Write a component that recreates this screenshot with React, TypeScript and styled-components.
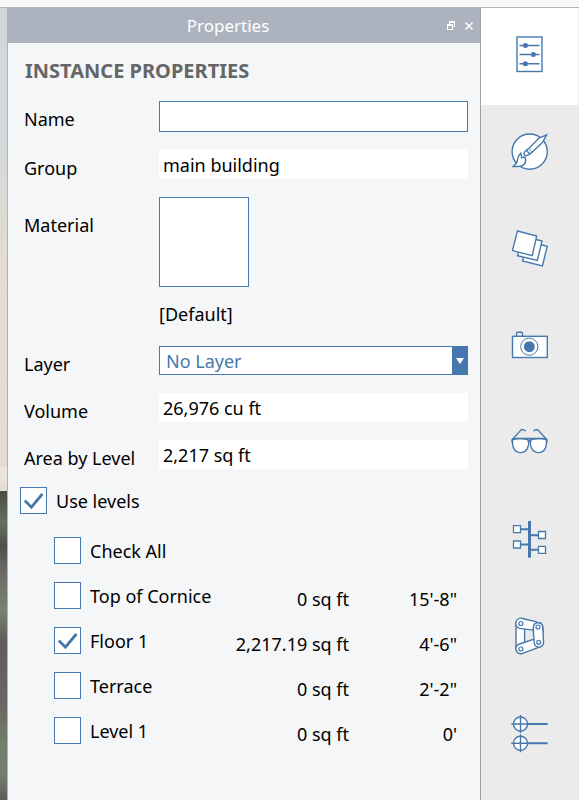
import React, { useState } from "react";
import styled, { createGlobalStyle } from "styled-components";

const BLUE = "#4678ad";
const FONT = '"Noto Sans", "Open Sans", sans-serif';

const GlobalStyle = createGlobalStyle`
  * { box-sizing: border-box; }
  html, body { margin: 0; }
  body { background: #f4f6f8; }
  body, button, input, select {
    font-family: ${FONT};
    font-size: 18px;
    line-height: 24px;
    color: #000;
  }
`;

const Window = styled.div`
  display: flex;
  flex-direction: column;
  min-height: 100vh;
`;

const TopStrip = styled.div`
  height: 8px;
  background: #f7f7f7;
  border-bottom: 1px solid #acb3bf;
`;

const Workspace = styled.div`
  flex: 1;
  display: flex;
`;

const SceneEdge = styled.div`
  width: 8px;
  border-right: 1px solid #acb3bf;
  background: linear-gradient(
    #d3d7db 0%,
    #d3d8db 16%,
    #dcdad5 24%,
    #e6ddd1 38%,
    #e5dcd0 58%,
    #eee9df 58%,
    #e3ddd1 61%,
    #4c4b46 61%,
    #65705f 65%,
    #4f504b 68%,
    #6d6866 71%,
    #77836f 76%,
    #605b5a 80%,
    #6b6664 88%,
    #728069 93%,
    #747d70 97%,
    #5e5a58 100%
  );
`;

const Panel = styled.section`
  flex: 1;
  min-width: 0;
  background: #f4f6f8;
`;

const TitleBar = styled.header`
  display: flex;
  align-items: center;
  height: 35px;
  padding: 0 2px 0 6px;
  background: #acb3bf;
`;

const Title = styled.h1`
  flex: 1;
  margin: 0;
  font-size: 17px;
  font-weight: 400;
  text-align: center;
  color: #fff;
`;

const TitleButton = styled.button`
  display: grid;
  place-items: center;
  width: 18px;
  height: 18px;
  padding: 0;
  border: 0;
  background: none;
`;

const Content = styled.div`
  padding: 16px 12px 16px 16px;
`;

const Heading = styled.h2`
  margin: 0 0 18px;
  padding-left: 1px;
  font-size: 20px;
  font-weight: 700;
  color: #666;
`;

const Fields = styled.div`
  display: grid;
  grid-template-columns: 135px 1fr;
  row-gap: 18px;
`;

const Label = styled.label<{ $tall?: boolean }>`
  padding-top: ${(p) => (p.$tall ? 17 : 7)}px;
  line-height: 22px;
  white-space: nowrap;
`;

const TextInput = styled.input`
  width: 100%;
  height: 31px;
  padding: 0 4px;
  border: 1px solid ${BLUE};
  border-radius: 0;
  background: #fff;
`;

const ReadOnlyInput = styled(TextInput)`
  height: 29px;
  border: 0;
`;

const Swatch = styled.button`
  display: block;
  width: 90px;
  height: 90px;
  border: 1px solid ${BLUE};
  background: #fff;
`;

const SwatchName = styled.div`
  padding: 15px 0 2px;
`;

const SelectBox = styled.div`
  display: grid;
  grid-template-columns: 1fr 16px;
  height: 29px;
  border: 1px solid ${BLUE};
  border-right: 0;
  background: linear-gradient(${BLUE}, ${BLUE}) right / 16px 100% no-repeat #fff;
`;

const Select = styled.select`
  grid-area: 1 / 1 / 2 / 3;
  appearance: none;
  padding: 0 20px 0 6px;
  border: 0;
  background: none;
  color: ${BLUE};
`;

const SelectArrow = styled.svg`
  grid-area: 1 / 2;
  place-self: center;
  pointer-events: none;
`;

const CheckLabel = styled.label`
  display: flex;
  align-items: center;
  gap: 9px;
  white-space: nowrap;
`;

const MasterRow = styled.div`
  display: flex;
  margin: 18px 0 14px -4px;
`;

const Box = styled.span`
  display: grid;
  width: 27px;
  height: 27px;
`;

const BoxInput = styled.input`
  grid-area: 1 / 1;
  appearance: none;
  margin: 0;
  border: 1px solid ${BLUE};
  background: #fff;
`;

const Tick = styled.svg`
  grid-area: 1 / 1;
  pointer-events: none;
`;

const LevelTable = styled.table`
  width: calc(100% - 41px);
  margin-left: 30px;
  border-collapse: collapse;
`;

const LevelCell = styled.td`
  height: 45px;
  padding: 0;
`;

const ValueCell = styled(LevelCell)`
  padding-top: 6px;
  text-align: right;
  white-space: nowrap;
`;

const ElevationCell = styled(ValueCell)`
  width: 108px;
`;

const Sidebar = styled.nav`
  display: flex;
  flex-direction: column;
  width: 99px;
  border-left: 1px solid #a0a0a0;
  border-right: 1px solid #ebebeb;
  background: #ebebeb;
`;

const TabButton = styled.button<{ $active: boolean }>`
  display: flex;
  justify-content: center;
  height: 97px;
  padding: 17px 0 0 1px;
  border: 0;
  background: ${(p) => (p.$active ? "#fff" : "none")};
`;

const TabIcon = styled.svg`
  flex: none;
  width: 60px;
  height: 60px;
  fill: #fff;
  stroke: ${BLUE};
  stroke-width: 1.4;
`;

type CheckProps = { label: string; checked: boolean; onChange: () => void };

function Check({ label, checked, onChange }: CheckProps) {
  return (
    <CheckLabel>
      <Box>
        <BoxInput type="checkbox" checked={checked} onChange={onChange} />
        {checked && (
          <Tick width="27" height="27" viewBox="0 0 27 27" fill="none" stroke={BLUE} strokeWidth="2.8">
            <path d="M4.8 13.6 11.4 20.2 22.4 7" />
          </Tick>
        )}
      </Box>
      {label}
    </CheckLabel>
  );
}

const tabs = [
  {
    name: "Properties",
    top: 0,
    icon: (
      <>
        <rect x="17" y="12" width="25" height="34.5" />
        <path d="M19.5 20.5h20M19.5 29.5h20M19.5 38.7h20" />
        <g fill={BLUE} stroke="none">
          <circle cx="25.4" cy="20.5" r="2.5" />
          <circle cx="33.4" cy="29.5" r="2.5" />
          <circle cx="25.4" cy="38.7" r="2.5" />
        </g>
      </>
    ),
  },
  {
    name: "Materials",
    top: 2,
    icon: (
      <>
        <circle cx="29.7" cy="31.6" r="17.6" />
        <path d="M46.6 14.8 39 18 28.6 28.8l3.2 3.8L42.4 22.6Z" />
        <path d="M28.6 28.8c-1.6.3-4.6 3-4.6 4.8 0 1.9 1.5 2.7 3 1.9 1.5-.8 3.8-2.2 4.8-2.9" />
        <path d="M26.4 30.3 30.2 34.2" />
        <path d="M20.7 33.2c-2.5 2.4-3.2 4.3-3.3 7-.2 2.5-1.6 4.5-4.2 6.3 3.3.2 7.3.4 9.7-1.1 2.3-1.5 3.4-3.6 2.5-7.3l-2-1-1.6.7Z" />
      </>
    ),
  },
  {
    name: "Layers",
    top: -1,
    icon: (
      <>
        <path d="m27.6 21.3 19.6 5-4.8 19.6-19.8-5Z" />
        <path d="m22.6 16 19.4 5-4.7 19.5-19.8-4.8Z" />
        <path d="m17.4 11 19.3 5-4.5 19.6-19.7-5Z" />
      </>
    ),
  },
  {
    name: "Scenes",
    top: 1,
    icon: (
      <>
        <path d="M16.5 21v-2.7q0-1 1-1h4q1 0 1 1V21" fill="none" />
        <rect x="12.5" y="21.3" width="34.8" height="21.2" />
        <circle cx="29.3" cy="31.7" r="8.6" strokeWidth="1" />
        <circle cx="29.3" cy="31.7" r="5.5" fill={BLUE} stroke="none" />
      </>
    ),
  },
  {
    name: "Visual styles",
    top: 1,
    icon: (
      <>
        <path d="M12.6 27.3c4-.8 11-.8 15.9.6.9 7.7-2.5 12.7-8 12.7-5.6 0-8.6-4.7-7.9-13.3Z" />
        <path d="M46.4 27.3c-4-.8-11-.8-15.9.6-.9 7.7 2.5 12.7 8 12.7 5.6 0 8.6-4.7 7.9-13.3Z" />
        <path
          d="M12.4 31 11.9 28l9.4-10.4 2 .1 2.5 1.3M46.6 31l.5-3-9.4-10.4-2 .1L33.2 19M12 28l4-1.5h27l4 1.5M27.5 29.5q2-2 4 0"
          fill="none"
        />
      </>
    ),
  },
  {
    name: "Levels tree",
    top: 0,
    icon: (
      <>
        <path d="M29.5 11v36.7" strokeWidth="3" />
        <path d="M21 19.3h8M21 34.5h8M30 25.2h8M30 39.8h8" strokeWidth="2" />
        <path d="M13.5 15.7h7v7h-7ZM13.5 31h7v7h-7ZM38.5 21.5h7v7h-7ZM38.5 36.3h7v7h-7Z" strokeWidth="1.3" />
      </>
    ),
  },
  {
    name: "Structure",
    top: 1,
    icon: (
      <>
        <path d="M16 17v26h8.6V19Z" />
        <path d="m19.5 38 16-5.3a4.5 4.5 0 0 1 5 8L22 47.6A4.9 4.9 0 0 1 19.5 38Z" />
        <path d="M33.4 21a4.7 4.7 0 0 1 9.3-.4l.9 15.5a4.7 4.7 0 0 1-9.4.6Z" />
        <path d="m21.5 12.2 15 3.7a4.6 4.6 0 0 1-1.8 8.5l-15-2a5.2 5.2 0 0 1 1.8-10.2Z" />
        <path d="M33.5 29.6 33.4 21a4.7 4.7 0 0 1 9.3-.4l.5 8" />
        <circle cx="20.9" cy="17.5" r="2" strokeWidth="1.2" />
        <circle cx="38" cy="21" r="2" strokeWidth="1.2" />
        <circle cx="38.7" cy="36.3" r="2" strokeWidth="1.2" />
        <circle cx="20.9" cy="43" r="2" strokeWidth="1.2" />
      </>
    ),
  },
  {
    name: "Levels",
    top: 0,
    icon: (
      <>
        <circle cx="20.5" cy="20" r="7" />
        <circle cx="20.5" cy="39.3" r="7" />
        <path d="M11.3 20h16M20.5 11v18M11.3 39.3h16M20.5 30.3v18" />
        <path d="M27 20h20.7M27 39.3h20.7" strokeWidth="1.9" />
      </>
    ),
  },
];

const initialLevels = [
  { name: "Top of Cornice", area: "0 sq ft", elevation: "15'-8\"", checked: false },
  { name: "Floor 1", area: "2,217.19 sq ft", elevation: "4'-6\"", checked: true },
  { name: "Terrace", area: "0 sq ft", elevation: "2'-2\"", checked: false },
  { name: "Level 1", area: "0 sq ft", elevation: "0'", checked: false },
];

export default function App() {
  const [active, setActive] = useState("Properties");
  const [useLevels, setUseLevels] = useState(true);
  const [levels, setLevels] = useState(initialLevels);
  const allChecked = levels.every((l) => l.checked);

  return (
    <>
      <GlobalStyle />
      <Window>
        <TopStrip />
        <Workspace>
          <SceneEdge />
          <Panel>
            <TitleBar>
              <Title>Properties</Title>
              <TitleButton aria-label="Undock">
                <svg width="8" height="9" viewBox="0 0 8 9" fill="#fff" shapeRendering="crispEdges">
                  <path d="M2 0h6v6H6V5h1V2H3v1H2Z" />
                  <path d="M0 3h6v6H0ZM1 5v3h4V5Z" fillRule="evenodd" />
                </svg>
              </TitleButton>
              <TitleButton aria-label="Close">
                <svg width="8" height="8" viewBox="0 0 8 8" stroke="#fff" strokeWidth="1.5">
                  <path d="m.5.5 7 7M7.500.500l-7 7" />
                </svg>
              </TitleButton>
            </TitleBar>
            <Content>
              <Heading>INSTANCE PROPERTIES</Heading>
              <Fields>
                <Label htmlFor="name">Name</Label>
                <TextInput id="name" type="text" />
                <Label htmlFor="group">Group</Label>
                <ReadOnlyInput id="group" readOnly value="main building" />
                <Label htmlFor="material" $tall>Material</Label>
                <div>
                  <Swatch id="material" />
                  <SwatchName>[Default]</SwatchName>
                </div>
                <Label htmlFor="layer">Layer</Label>
                <SelectBox>
                  <Select id="layer" defaultValue="none">
                    <option value="none">No Layer</option>
                  </Select>
                  <SelectArrow width="8" height="6" viewBox="0 0 8 6" fill="#fff">
                    <path d="M0 0h8L4 6Z" />
                  </SelectArrow>
                </SelectBox>
                <Label htmlFor="volume">Volume</Label>
                <ReadOnlyInput id="volume" readOnly value="26,976 cu ft" />
                <Label htmlFor="area">Area by Level</Label>
                <ReadOnlyInput id="area" readOnly value="2,217 sq ft" />
              </Fields>
              <MasterRow>
                <Check label="Use levels" checked={useLevels} onChange={() => setUseLevels(!useLevels)} />
              </MasterRow>
              <LevelTable>
                <tbody>
                  <tr>
                    <LevelCell colSpan={3}>
                      <Check
                        label="Check All"
                        checked={allChecked}
                        onChange={() => setLevels(levels.map((l) => ({ ...l, checked: !allChecked })))}
                      />
                    </LevelCell>
                  </tr>
                  {levels.map((level) => (
                    <tr key={level.name}>
                      <LevelCell>
                        <Check
                          label={level.name}
                          checked={level.checked}
                          onChange={() =>
                            setLevels(levels.map((l) => (l === level ? { ...l, checked: !l.checked } : l)))
                          }
                        />
                      </LevelCell>
                      <ValueCell>{level.area}</ValueCell>
                      <ElevationCell>{level.elevation}</ElevationCell>
                    </tr>
                  ))}
                </tbody>
              </LevelTable>
            </Content>
          </Panel>
          <Sidebar aria-label="Palettes">
            {tabs.map((tab) => (
              <TabButton
                key={tab.name}
                aria-label={tab.name}
                $active={active === tab.name}
                onClick={() => setActive(tab.name)}
              >
                <TabIcon viewBox={`0 ${tab.top} 60 60`}>{tab.icon}</TabIcon>
              </TabButton>
            ))}
          </Sidebar>
        </Workspace>
      </Window>
    </>
  );
}
